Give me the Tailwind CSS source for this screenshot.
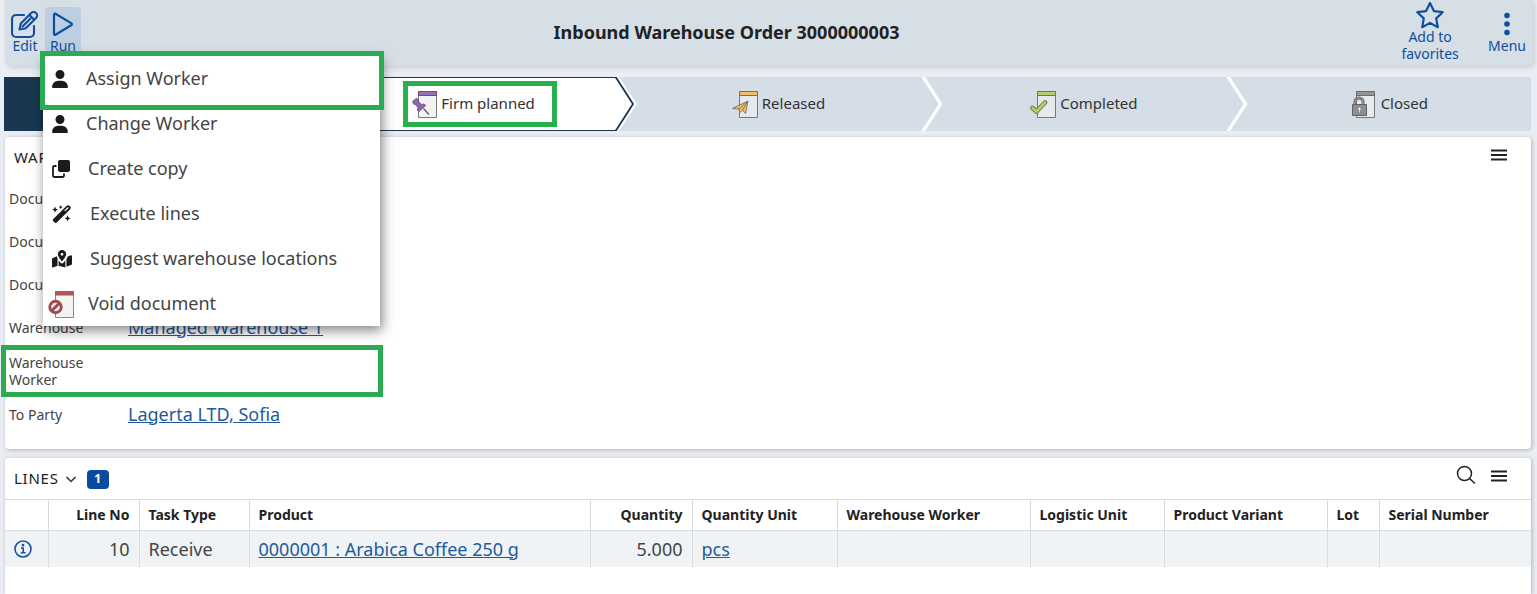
<!DOCTYPE html>
<html lang="en">
<head>
<meta charset="utf-8">
<meta name="viewport" content="width=device-width, initial-scale=1">
<title>Inbound Warehouse Order 3000000003</title>
<script src="https://cdn.jsdelivr.net/npm/@tailwindcss/browser@4"></script>
</head>
<body class="min-h-screen overflow-hidden bg-[#eaedf3] font-['Noto_Sans',sans-serif] text-[#333]">
<div class="flex min-h-screen flex-col">
  <!-- Toolbar -->
  <header class="mr-1 ml-[5px] flex h-[66px] items-start rounded-b-md bg-[#d6dee6] text-sm text-[#0f4f9e] shadow-[2px_2px_5px_rgba(0,0,0,0.12)]">
    <div class="flex gap-0.5 pt-[7px] pl-0.5">
      <button type="button" class="flex h-[50px] w-9 flex-col items-center pt-1">
        <svg class="size-7 shrink-0" viewBox="0 0 28 28" fill="none" stroke="currentColor" stroke-width="2.1" stroke-linecap="round" stroke-linejoin="round"><path d="M13 4H5a4 4 0 0 0-4 4v14a4 4 0 0 0 4 4h14a4 4 0 0 0 4-4v-7"/><path d="M8.500 18.500l1.300-6L20.200 2a3.400 3.400 0 0 1 4.900 4.900L14.700 17.200z"/><path d="M18.500 4l4.700 4.700M11.500 15.500l8-8"/></svg>
        <span class="leading-[14px]">Edit</span>
      </button>
      <div class="relative">
        <button type="button" aria-haspopup="menu" aria-expanded="true" class="flex h-[50px] w-9 flex-col items-center rounded-t bg-[#bccfe2] pt-1">
          <svg class="size-7 shrink-0" viewBox="0 0 28 28" fill="none" stroke="currentColor" stroke-width="2.2" stroke-linejoin="round"><path d="M5 3.500v19.500a1 1 0 0 0 1.500.8L22.500 14a1 1 0 0 0 0-1.600L6.500 2.700A1 1 0 0 0 5 3.500z"/></svg>
          <span class="leading-[14px]">Run</span>
        </button>
        <ul role="menu" class="absolute top-[49px] -left-0.5 z-20 w-[337px] bg-white text-lg text-[#444] shadow-[2px_4px_12px_rgba(0,0,0,0.5)]">
          <li role="none" class="relative">
            <button type="button" role="menuitem" class="flex h-[45px] w-full items-center gap-[18px] pl-[9px]">
              <svg class="h-[18px] w-4" viewBox="0 0 448 512" fill="#1b1b1b"><path d="M224 256A128 128 0 1 0 224 0a128 128 0 1 0 0 256zm-45.700 48C79.800 304 0 383.800 0 482.300C0 498.700 13.300 512 29.700 512H418.300c16.400 0 29.700-13.300 29.700-29.700C448 383.800 368.200 304 269.700 304H178.300z"/></svg>
              <span class="pb-0.5">Assign Worker</span></button>
            <span class="pointer-events-none absolute -top-[5px] -right-1 -bottom-[9px] -left-[3px] border-[5px] border-[#2bab52]"></span>
          </li>
          <li role="none">
            <button type="button" role="menuitem" class="flex h-[45px] w-full items-center gap-[18px] pl-[9px]">
              <svg class="h-[18px] w-4" viewBox="0 0 448 512" fill="#1b1b1b"><path d="M224 256A128 128 0 1 0 224 0a128 128 0 1 0 0 256zm-45.700 48C79.800 304 0 383.800 0 482.300C0 498.700 13.300 512 29.700 512H418.300c16.400 0 29.700-13.300 29.700-29.700C448 383.800 368.200 304 269.700 304H178.300z"/></svg>
              <span class="pb-0.5">Change Worker</span></button>
          </li>
          <li role="none">
            <button type="button" role="menuitem" class="flex h-[45px] w-full items-center gap-[18px] pl-[9px]">
              <svg class="size-[18px]" viewBox="0 0 18 18"><rect x="6" width="12" height="12" rx="2" fill="#1b1b1b"/><path d="M4.500 6H2.200A1.200 1.200 0 0 0 1 7.200v8.600A1.200 1.200 0 0 0 2.200 17h8.600a1.200 1.200 0 0 0 1.200-1.200V13.500" fill="none" stroke="#1b1b1b" stroke-width="1.800"/></svg>
              <span class="pb-0.5">Create copy</span></button>
          </li>
          <li role="none">
            <button type="button" role="menuitem" class="flex h-[45px] w-full items-center gap-[18px] pl-[9px]">
              <svg class="h-[18px] w-5" viewBox="0 0 20 18" fill="#1b1b1b"><path d="M1.500 13.700L14.500 .9a2.300 2.300 0 0 1 3.200 0l.3.300a2.300 2.300 0 0 1 0 3.200L5 17.300a1.900 1.900 0 0 1-2.700 0l-.8-.8a1.900 1.900 0 0 1 0-2.800z"/><path d="M12.700 5.900L16.300 2.500" stroke="#fff" stroke-width="1.300"/><path d="M3 1.500l.9 2.200 2.200.9-2.200.9L3 7.700l-.9-2.200L0 4.600l2.100-.9zM8.700 0l.6 1.500 1.500.6-1.500.6-.6 1.500-.6-1.500-1.500-.6 1.500-.6zM15.600 10.200l.9 2.200 2.200.9-2.200.9-.9 2.200-.9-2.200-2.200-.9 2.200-.9z"/></svg>
              <span class="pb-0.5">Execute lines</span></button>
          </li>
          <li role="none">
            <button type="button" role="menuitem" class="flex h-[45px] w-full items-center gap-[18px] pl-[9px]">
              <svg class="h-[18px] w-5" viewBox="0 0 576 512" fill="#1b1b1b"><path d="M408 120c0 54.600-73.100 151.900-105.200 192c-7.700 9.600-22 9.600-29.600 0C241.100 271.900 168 174.600 168 120C168 53.700 221.700 0 288 0s120 53.700 120 120zm-120 40a40 40 0 1 0 0-80 40 40 0 1 0 0 80z" fill-rule="evenodd"/><path d="M138 179c4 20 12 41 22 61V450L32 502c-16 6-32-5-32-22V253c0-10 6-19 15-22zM416 260c10-20 26-51 30-71l98-40c16-6 32 5 32 22V398c0 10-6 19-15 22L416 478zM192 290c20 30 42 57 56 75c20 25 60 25 80 0c14-18 36-45 56-75V504L192 449z"/></svg>
              <span class="pb-0.5">Suggest warehouse locations</span></button>
          </li>
          <li role="none">
            <button type="button" role="menuitem" class="flex h-[45px] w-full items-center gap-3.5 pl-[5px]">
              <svg class="h-7 w-[26px]" viewBox="0 0 26 28"><path d="M7.500 1.500h18v26h-18z" fill="#f3f3f2" stroke="#888"/><path d="M7 1h19v4.500H7z" fill="#b45558"/><circle cx="7.500" cy="17" r="7.200" fill="#a04a4d"/><circle cx="7.500" cy="17" r="4.300" fill="#f5e8e8"/><path d="M11 13.500l-7 7" stroke="#a04a4d" stroke-width="3"/></svg>
              <span class="pb-0.5">Void document</span></button>
          </li>
        </ul>
      </div>
    </div>
    <h1 class="flex-1 pt-5 pr-[22px] text-center text-lg leading-6 font-bold text-[#222]">Inbound Warehouse Order 3000000003</h1>
    <div class="flex pr-[7px]">
      <button type="button" class="flex w-[72px] flex-col items-center">
        <svg class="size-[30px] shrink-0" viewBox="0 0 30 30" fill="none" stroke="currentColor" stroke-width="2.200" stroke-linejoin="round"><path d="M15 3l3.900 8.100 8.800 1.100-6.500 6.200 1.600 8.800L15 22.900l-7.800 4.300 1.600-8.800-6.500-6.200 8.800-1.100z"/></svg>
        <span class="-mt-0.5 leading-[17px]">Add to favorites</span>
      </button>
      <button type="button" class="ml-[22px] flex flex-col items-center pt-[11px]">
        <svg class="h-[26px] w-2 shrink-0" viewBox="0 0 8 26" fill="currentColor"><circle cx="4" cy="4.500" r="2.800"/><circle cx="4" cy="13" r="2.800"/><circle cx="4" cy="21.500" r="2.800"/></svg>
        <span class="leading-[17px]">Menu</span>
      </button>
    </div>
  </header>

  <!-- Document states -->
  <ol class="mt-[11px] mr-1.5 ml-1 grid h-[54px] grid-cols-5 text-[15px] text-[#333]">
    <li class="relative z-[1] bg-[#193750]"></li>
    <li class="relative flex items-center justify-center border-y border-[#1b3650] bg-white pl-[22px]">
      <div class="relative flex items-center gap-1">
        <svg class="h-7 w-[26px]" viewBox="0 0 26 28"><path d="M7.500 1.500h18v26h-18z" fill="#f3f3f4" stroke="#777"/><path d="M7.500 1.500h18v4h-18z" fill="#9a6fb5" stroke="#6b4a85"/><path d="M12.500 18.500l5.500 6" stroke="#666" stroke-width="1.500"/><path d="M1.500 11.500l4-3.300 2 1.700-.2 1.600 3.500 3.200 2.400-.8 1.500 1.600-7 6.200-1.500-1.700.8-2.300-2.900-3.700-1.400.2z" fill="#9166b0" stroke="#5f4a75" stroke-width=".8"/></svg>
        <span class="pb-0.5">Firm planned</span>
        <span class="pointer-events-none absolute -top-[9px] -right-[22px] -bottom-[9px] -left-2 border-[5px] border-[#27b04c]"></span>
      </div>
      <svg class="absolute -top-px left-full z-[1] h-[54px] w-6" viewBox="0 0 24 54"><path d="M0 0h4l18 27L4 54H0z" fill="#fff"/><path d="M0 .5h1l17 26.500L1 53.500H0" fill="#fff" stroke="#1b3650" stroke-width="1.800"/></svg>
    </li>
    <li class="relative flex items-center justify-center bg-[#d5dde6] pl-[22px]">
      <div class="flex items-center gap-1">
        <svg class="h-7 w-[26px]" viewBox="0 0 26 28"><path d="M7.500 1.500h18v26h-18z" fill="#e7eaec" stroke="#777"/><path d="M7.500 1.500h18v4h-18z" fill="#eec064" stroke="#77705c"/><path d="M.5 18.500L16 11l-2.500 12.500-3-3.500-3 3-.5-4z" fill="#f0c364" stroke="#77705c" stroke-width=".9" stroke-linejoin="round"/><path d="M7 19l9-8-5.500 9" fill="none" stroke="#77705c" stroke-width=".9"/></svg>
        <span class="pb-0.5">Released</span>
      </div>
      <svg class="absolute top-0 left-full z-[1] h-[54px] w-6" viewBox="0 0 24 54"><path d="M0 0h4l17 27L4 54H0z" fill="#d5dde6"/><path d="M2 -2l18.500 29L2 56" fill="none" stroke="#fff" stroke-width="3.200"/></svg>
    </li>
    <li class="relative flex items-center justify-center bg-[#d5dde6] pl-[22px]">
      <div class="flex items-center gap-1">
        <svg class="h-7 w-[26px]" viewBox="0 0 26 28"><path d="M7.500 1.500h18v26h-18z" fill="#e7eaec" stroke="#777"/><path d="M7.500 1.500h18v4h-18z" fill="#b4cf70" stroke="#6b7c4a"/><path d="M2.500 18l4 3.500L15 12.500" fill="none" stroke="#66783f" stroke-width="4.600" stroke-linecap="round" stroke-linejoin="round"/><path d="M2.500 18l4 3.500L15 12.500" fill="none" stroke="#b4cf70" stroke-width="2.800" stroke-linecap="round" stroke-linejoin="round"/></svg>
        <span class="pb-0.5">Completed</span>
      </div>
      <svg class="absolute top-0 left-full z-[1] h-[54px] w-6" viewBox="0 0 24 54"><path d="M0 0h4l17 27L4 54H0z" fill="#d5dde6"/><path d="M1 -2l18.500 29L1 56" fill="none" stroke="#fff" stroke-width="3.200"/></svg>
    </li>
    <li class="flex items-center justify-center bg-[#d5dde6] pl-[22px]">
      <div class="flex items-center gap-1.5">
        <svg class="h-7 w-6" viewBox="0 0 24 28"><path d="M5.500 1.500h18v26h-18z" fill="#e7eaec" stroke="#777"/><path d="M5.500 1.500h18v4h-18z" fill="#949494" stroke="#6c6c6c"/><path d="M4 16v-4a4 4 0 0 1 8 0v4" fill="none" stroke="#606060" stroke-width="3"/><path d="M4 16v-4a4 4 0 0 1 8 0v4" fill="none" stroke="#aaa" stroke-width="1.200"/><path d="M1.500 14.500h14v11h-14z" fill="#8f8f8f" stroke="#606060"/><path d="M8.500 17a1.700 1.700 0 0 1 .9 3.100v3H7.600v-3A1.700 1.700 0 0 1 8.500 17z" fill="#eee" stroke="#606060" stroke-width=".6"/></svg>
        <span class="pb-0.5">Closed</span>
      </div>
    </li>
  </ol>

  <!-- Order details -->
  <section class="mt-1.5 mr-1.5 ml-[5px] h-[312px] rounded bg-white shadow-[1px_1px_4px_rgba(0,0,0,0.25)]">
    <div class="flex h-10 items-center justify-between pr-6 pl-[9px]">
      <h2 class="text-[15px] tracking-wider text-[#222]">WAREHOUSE</h2>
      <button type="button" aria-label="Section menu" class="-mt-1"><svg class="h-3 w-4" viewBox="0 0 16 12" stroke="#222" stroke-width="2"><path d="M0 1.500h16M0 6h16M0 10.500h16"/></svg></button>
    </div>
    <dl class="text-sm leading-[17px] text-[#444]">
      <div class="flex min-h-[43px] items-center pl-1"><dt class="w-[119px]">Document</dt><dd></dd></div>
      <div class="flex min-h-[43px] items-center pl-1"><dt class="w-[119px]">Document</dt><dd></dd></div>
      <div class="flex min-h-[43px] items-center pl-1"><dt class="w-[119px]">Document</dt><dd></dd></div>
      <div class="flex min-h-[43px] items-center pl-1"><dt class="w-[119px]">Warehouse</dt><dd><a href="#" class="block pb-0.5 text-lg leading-6 text-[#1e5a9c] underline">Managed Warehouse 1</a></dd></div>
      <div class="relative flex min-h-[43px] items-center py-[5px] pl-1"><dt class="w-[119px] pr-8">Warehouse Worker</dt><dd></dd>
        <span class="pointer-events-none absolute -inset-y-1 -left-1 w-[382px] border-[5px] border-[#2bab52]"></span></div>
      <div class="flex min-h-[43px] items-center pl-1"><dt class="w-[119px]">To Party</dt><dd><a href="#" class="block pb-0.5 text-lg leading-6 text-[#1e5a9c] underline">Lagerta LTD, Sofia</a></dd></div>
    </dl>
  </section>

  <!-- Order lines -->
  <section class="mt-[9px] mr-1.5 ml-[5px] flex-1 rounded-t bg-white shadow-[1px_1px_4px_rgba(0,0,0,0.25)]">
    <div class="flex h-[41px] items-center pr-6 pl-[9px]">
      <h2 class="text-[15px] tracking-wider text-[#222]">LINES</h2>
      <button type="button" aria-label="Lines views" class="ml-1.5"><svg class="size-3" viewBox="0 0 12 12" fill="none" stroke="#333" stroke-width="1.500"><path d="M1.500 4L6 8.500 10.500 4"/></svg></button>
      <span class="mt-px ml-2.5 flex h-[19px] w-[22px] items-center justify-center rounded bg-[#0a4b9f] text-xs font-bold text-white">1</span>
      <button type="button" aria-label="Search" class="-mt-2 ml-auto"><svg class="size-5" viewBox="0 0 20 20" fill="none" stroke="#222" stroke-width="1.500"><circle cx="8.500" cy="8.500" r="7"/><path d="M13.500 13.500L19 18.500"/></svg></button>
      <button type="button" aria-label="Lines menu" class="-mt-1.5 ml-[15px]"><svg class="h-3 w-4" viewBox="0 0 16 12" stroke="#222" stroke-width="2"><path d="M0 1.500h16M0 6h16M0 10.500h16"/></svg></button>
    </div>
    <table class="w-full table-fixed border-collapse text-left">
      <colgroup><col class="w-[43px]"><col class="w-[91px]"><col class="w-[110px]"><col class="w-[341px]"><col class="w-[102px]"><col class="w-[145px]"><col class="w-[193px]"><col class="w-[134px]"><col class="w-[163px]"><col class="w-[52px]"><col></colgroup>
      <thead>
        <tr class="h-[31px] divide-x divide-[#d9dcdf] border-y border-[#d9dcdf] text-sm text-[#222] [&>th]:px-[9px] [&>th]:pb-px [&>th]:font-bold [&>th]:whitespace-nowrap">
          <th aria-label="Info"></th><th class="text-right">Line No</th><th>Task Type</th><th>Product</th><th class="text-right">Quantity</th><th>Quantity Unit</th><th>Warehouse Worker</th><th>Logistic Unit</th><th>Product Variant</th><th>Lot</th><th>Serial Number</th>
        </tr>
      </thead>
      <tbody>
        <tr class="h-9 divide-x divide-[#d9dcdf] bg-[#eff3f6] text-lg leading-6 text-[#444] [&>td]:px-[9px]">
          <td><button type="button" aria-label="Line details" class="block"><svg class="size-[18px]" viewBox="0 0 18 18" fill="none" stroke="#1553a0" stroke-width="1.600"><circle cx="9" cy="9" r="8"/><path d="M7 8h2.200v4.500M6.800 12.800h4.700"/><circle cx="9" cy="5.200" r=".6" fill="#1553a0"/></svg></button></td>
          <td class="text-right">10</td><td>Receive</td><td><a href="#" class="text-[#1e5a9c] underline">0000001 : Arabica Coffee 250 g</a></td><td class="text-right">5.000</td><td><a href="#" class="text-[#1e5a9c] underline">pcs</a></td><td></td><td></td><td></td><td></td><td></td>
        </tr>
      </tbody>
    </table>
  </section>
</div>
</body>
</html>
